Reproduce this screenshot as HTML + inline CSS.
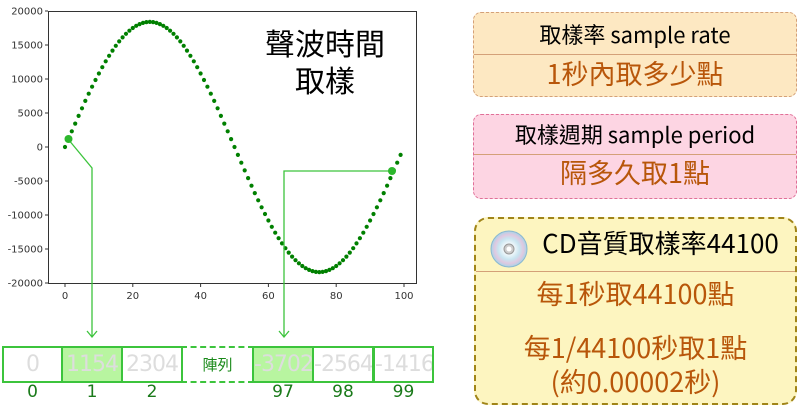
<!DOCTYPE html><html><head><meta charset="utf-8"><style>
body{margin:0;width:800px;height:407px;background:#fff;font-family:"Noto Sans CJK TC",sans-serif;position:relative;overflow:hidden}
.box{position:absolute;box-sizing:border-box;border-radius:8px;text-align:center}
.t{position:absolute;left:0;right:0;color:#000;line-height:1.2}
.o{position:absolute;left:0;right:0;color:#b8560a;line-height:1.2}
.cell{position:absolute;top:346px;height:37px;box-sizing:border-box;border:2px solid #3cc43c;color:#ddd;font-size:22px;line-height:33px;text-align:center;overflow:hidden;white-space:nowrap;font-family:"DejaVu Sans",sans-serif;letter-spacing:-1px}
.idx{position:absolute;top:382px;font-size:17px;color:#1a7a1a;text-align:center;font-family:"DejaVu Sans",sans-serif}
</style></head><body>
<svg width="440" height="345" style="position:absolute;left:0;top:0" xmlns="http://www.w3.org/2000/svg" font-family="DejaVu Sans" font-size="10" fill="#333">
<rect x="48.5" y="11.5" width="368" height="272" fill="none" stroke="#333" stroke-width="1"/>
<g id="ticks"></g>
<g id="dots" fill="#008000"></g>
<polyline points="68,139 92,168 92,336" fill="none" stroke="#3cc43c" stroke-width="1.3"/>
<polyline points="392,171 284,171 284,336" fill="none" stroke="#3cc43c" stroke-width="1.3"/>
<path d="M87,331 L92,337 L97,331 M279,331 L284,337 L289,331" fill="none" stroke="#3cc43c" stroke-width="1.3"/>
<circle cx="68.5" cy="139" r="4" fill="#2db82d"/>
<circle cx="392" cy="171" r="4" fill="#2db82d"/>
<text x="325" y="55" font-family="Noto Sans CJK TC" font-size="30" fill="#000" text-anchor="middle">聲波時間</text>
<text x="325" y="92" font-family="Noto Sans CJK TC" font-size="30" fill="#000" text-anchor="middle">取樣</text>
</svg>
<script>
var d=document.getElementById('dots'),t=document.getElementById('ticks'),s='';
for(var i=0;i<100;i++){var x=65+i*3.39,y=147-18.4*6.8*Math.sin(2*Math.PI*i/100);s+='<circle cx="'+x.toFixed(1)+'" cy="'+y.toFixed(1)+'" r="2.1"/>';}
d.innerHTML=s;s='';
for(var v=20000;v>=-20000;v-=5000){var y=147-v*0.0068;s+='<line x1="45" x2="48" y1="'+y+'" y2="'+y+'" stroke="#333"/><text x="43" y="'+(y+3.5)+'" text-anchor="end">'+v+'</text>';}
for(var k=0;k<=100;k+=20){var x=65+k*3.39;s+='<line x1="'+x+'" x2="'+x+'" y1="284" y2="287" stroke="#333"/><text x="'+x+'" y="299" text-anchor="middle">'+k+'</text>';}
t.innerHTML=s;
</script>
<div class="cell" style="left:2px;width:61px">0</div>
<div class="cell" style="left:61px;width:62px;background:#b8f5a0">1154</div>
<div class="cell" style="left:121px;width:62px">2304</div>
<div class="cell" style="left:181px;width:73px;border-style:dashed;color:#1a8a1a;font-size:15px;font-family:'Noto Sans CJK TC',sans-serif;letter-spacing:0">陣列</div>
<div class="cell" style="left:252px;width:62px;background:#b8f5a0">-3702</div>
<div class="cell" style="left:312px;width:62px">-2564</div>
<div class="cell" style="left:373px;width:61px">-1416</div>
<div class="idx" style="left:2px;width:61px">0</div>
<div class="idx" style="left:61px;width:62px">1</div>
<div class="idx" style="left:121px;width:62px">2</div>
<div class="idx" style="left:252px;width:62px">97</div>
<div class="idx" style="left:312px;width:62px">98</div>
<div class="idx" style="left:373px;width:61px">99</div>

<div class="box" style="left:473px;top:12px;width:324px;height:85px;background:#fde8c2;border:1.5px dashed #d4a078">
<div class="t" style="top:8px;font-size:22px">取樣率 sample rate</div>
<div style="position:absolute;left:0;right:0;top:41px;border-top:1px solid #d4a078"></div>
<div class="o" style="top:44px;font-size:27px">1秒內取多少點</div>
</div>
<div class="box" style="left:473px;top:114px;width:324px;height:85px;background:#fdd5e3;border:1.5px dashed #e07098">
<div class="t" style="top:6px;font-size:22px">取樣週期 sample period</div>
<div style="position:absolute;left:0;right:0;top:39px;border-top:1px solid #d4a078"></div>
<div class="o" style="top:41px;font-size:27px">隔多久取1點</div>
</div>
<div class="box" style="left:474px;top:217px;width:323px;height:188px;background:#fdf5c0;border:2.5px dashed #a08418;border-radius:14px">
<svg width="38" height="38" style="position:absolute;left:14px;top:11px" viewBox="0 0 38 38"><defs><radialGradient id="g"><stop offset="0.2" stop-color="#fff"/><stop offset="0.6" stop-color="#c8e4f0"/><stop offset="0.8" stop-color="#e0c8e0"/><stop offset="1" stop-color="#a8d4e8"/></radialGradient></defs><circle cx="19" cy="19" r="18" fill="url(#g)" stroke="#8ab8d0"/><circle cx="19" cy="19" r="5" fill="#ccc" stroke="#999"/><circle cx="19" cy="19" r="2.5" fill="#fff"/></svg>
<div class="t" style="top:8px;left:50px;font-size:26px">CD音質取樣率44100</div>
<div style="position:absolute;left:0;right:0;top:52px;border-top:1px solid #d4a078"></div>
<div class="o" style="top:58px;font-size:27px">每1秒取44100點</div>
<div class="o" style="top:112px;font-size:27px">每1/44100秒取1點</div>
<div class="o" style="top:146px;font-size:27px">(約0.00002秒)</div>
</div>
</body></html>
